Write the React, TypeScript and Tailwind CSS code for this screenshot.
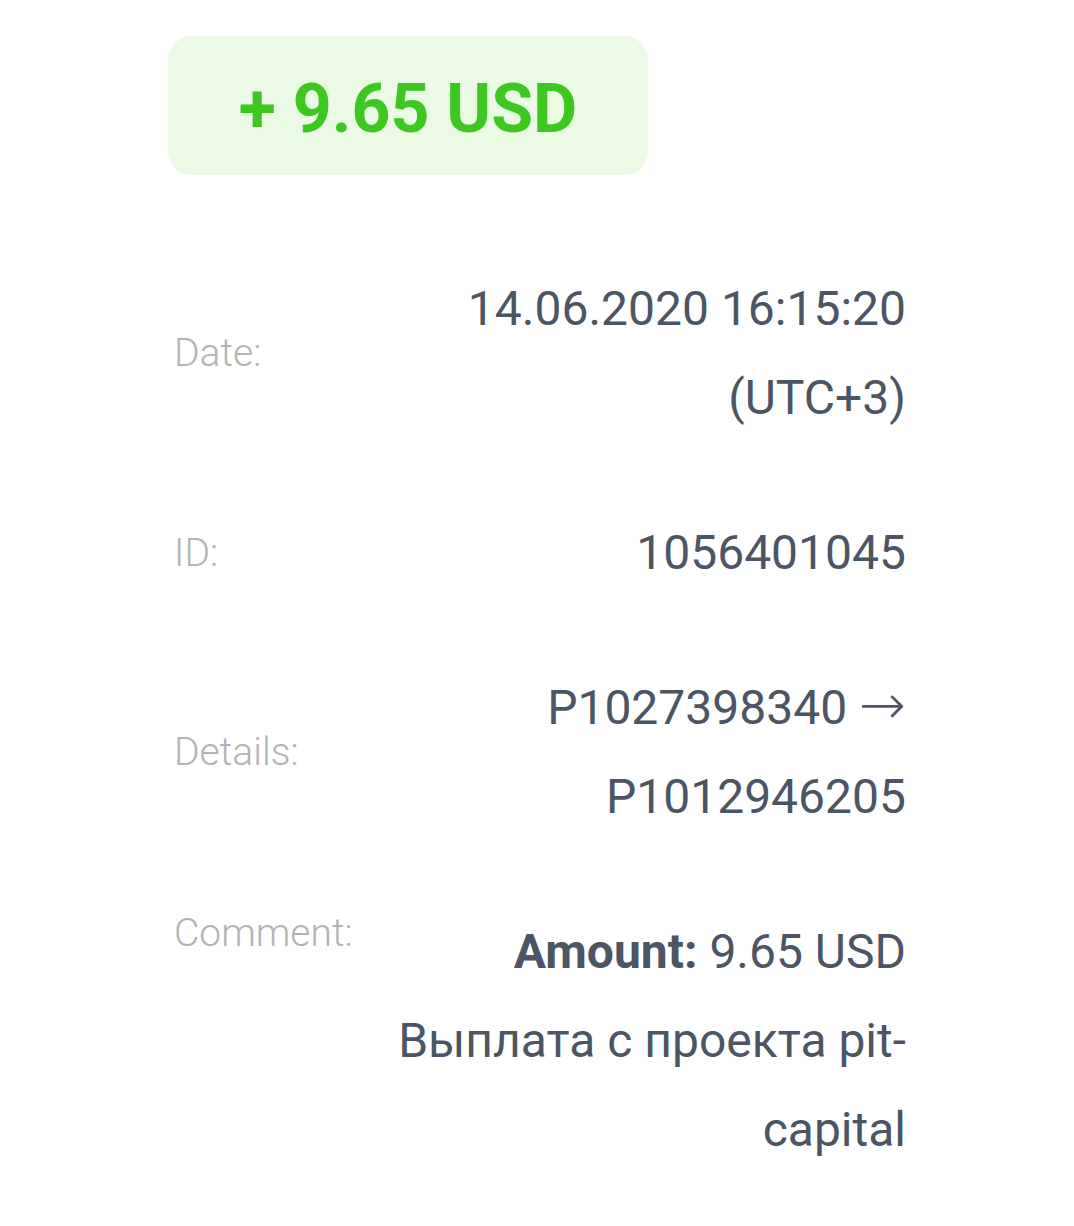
const font = { fontFamily: 'Roboto, "Noto Sans", sans-serif' };

type Row = {
  label: string;
  lines: React.ReactNode[];
  top?: boolean;
};

const rows: Row[] = [
  { label: 'Date:', lines: ['14.06.2020 16:15:20', '(UTC+3)'] },
  { label: 'ID:', lines: ['1056401045'] },
  {
    label: 'Details:',
    lines: [
      <>
        P1027398340 <span className="font-['DejaVu_Sans',sans-serif] text-[56px] font-light leading-none">→</span>
      </>,
      'P1012946205',
    ],
  },
  {
    label: 'Comment:',
    top: true,
    lines: [
      <>
        <span className="font-bold">Amount:</span> 9.65 USD
      </>,
      'Выплата с проекта pit-',
      'capital',
    ],
  },
];

export default function App() {
  return (
    <div className="min-h-[1226px] w-full bg-white" style={font}>
      <div className="flex flex-col px-[168px] pt-[36px]">
        {/* amount badge */}
        <div className="flex h-[139px] w-[480px] items-center justify-center rounded-[24px] bg-[#eafae4] pt-[6px]">
          <span className="text-[68px] font-bold leading-none text-[#3cc81f]">+ 9.65 USD</span>
        </div>

        <div className="mt-[89px] flex flex-col gap-[66px] pl-[6px]">
          {rows.map((row) => (
            <div
              key={row.label}
              className={`flex justify-between ${row.top ? 'items-start' : 'items-center'}`}
            >
              <div className="text-[39px] font-light leading-[52px] text-[#b3b3b3]">{row.label}</div>
              <div className="flex flex-col items-end text-right text-[48px] leading-[89px] text-[#4b5563]">
                {row.lines.map((line, i) => (
                  <div key={i} className="h-[89px]">
                    {line}
                  </div>
                ))}
              </div>
            </div>
          ))}
        </div>
      </div>
    </div>
  );
}
